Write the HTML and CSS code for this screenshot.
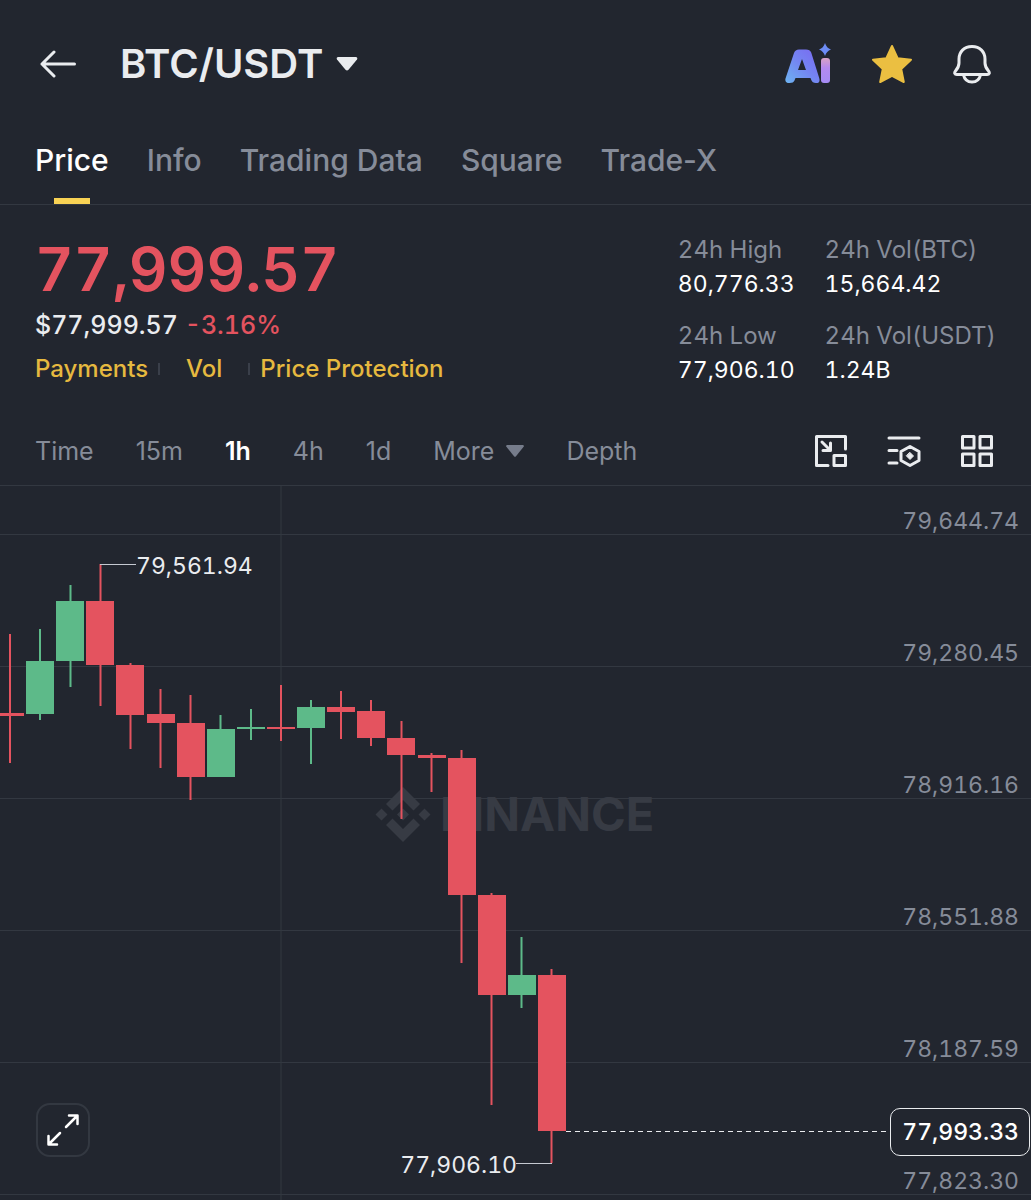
FILE: index.html
```html
<!DOCTYPE html>
<html lang="en">
<head>
    <meta charset="UTF-8">
    <meta name="viewport" content="width=device-width, initial-scale=1.0">
    <title>BTC/USDT</title>
    <link rel="stylesheet" href="styles.css">
</head>
<body>

    <!-- Top bar -->
    <header class="topbar">
        <button class="icon-btn back" type="button" aria-label="Back">
            <svg width="36" height="28" viewBox="0 0 36 28" fill="none" stroke="#eaecef" stroke-width="3" stroke-linecap="round" stroke-linejoin="round">
                <path d="M34.500 14H2M14 2L2 14l12 12"/>
            </svg>
        </button>
        <h1 class="pair">
            <button class="pair-btn" type="button">BTC/USDT
                <svg width="22" height="14" viewBox="0 0 22 14" fill="#eaecef"><path d="M2 0h18q2 .6 1 2.400l-8.500 10.300q-1.500 1.400-3 0L1 2.400Q0 .6 2 0z"/></svg>
            </button>
        </h1>
        <div class="topbar-actions">
            <button class="icon-btn" type="button" aria-label="AI">
                <svg width="46" height="42" viewBox="0 0 46 42">
                    <defs>
                        <linearGradient id="aiA" x1="0" y1="1" x2="1" y2="0">
                            <stop offset="0" stop-color="#6db4f2"/>
                            <stop offset=".5" stop-color="#7485f2"/>
                            <stop offset="1" stop-color="#7a68f0"/>
                        </linearGradient>
                        <linearGradient id="aiI" x1="0" y1="0" x2="0" y2="1">
                            <stop offset="0" stop-color="#d9a3c4"/>
                            <stop offset=".4" stop-color="#b48af0"/>
                            <stop offset="1" stop-color="#a58cf5"/>
                        </linearGradient>
                    </defs>
                    <path fill="url(#aiA)" fill-rule="evenodd" d="M14 6.500h7q4 0 5.200 3l8 25.500q1.500 5-3.200 5-3.700 0-4.700-3l-.8-2H10.500l-1 2.500Q8.500 40 4.500 40q-5 0-4-4.500L9 10q1.200-3.500 5-3.500zM17 16l-4 11h8z"/>
                    <rect x="36" y="15" width="9" height="25" rx="3" fill="url(#aiI)"/>
                    <path fill="#6d8cf5" d="M40 0q1.500 5 6 6.500-4.500 1.500-6 6.500-1.500-5-6-6.500 4.500-1.500 6-6.500z"/>
                </svg>
            </button>
            <button class="icon-btn" type="button" aria-label="Favorite">
                <svg width="40" height="40" viewBox="0 0 40 40" fill="#ebbf41" stroke="#ebbf41" stroke-width="2" stroke-linejoin="round">
                    <path d="M20 2l5.600 12.200L39 15.700l-9.800 9.300 2.600 13L20 31.800 8.200 38l2.600-13L1 15.700l13.400-1.500z"/>
                </svg>
            </button>
            <button class="icon-btn" type="button" aria-label="Alerts">
                <svg width="38" height="40" viewBox="0 0 38 40" fill="none" stroke="#eaecef" stroke-width="3" stroke-linejoin="round">
                    <path d="M19 2.500C11 2.500 6 8 6 15v4c0 4-1.300 5.500-3.500 8-1.500 2-.8 3.500 1.300 3.500h30.400c2.100 0 2.800-1.500 1.300-3.500-2.200-2.500-3.500-4-3.500-8v-4c0-7-5-12.500-13-12.500zM10.500 31c1 4.500 4 7 8.500 7s7.500-2.500 8.500-7"/>
                </svg>
            </button>
        </div>
    </header>

    <!-- Section tabs -->
    <nav class="tabs">
        <a class="tab active" href="#price">Price</a>
        <a class="tab" href="#info">Info</a>
        <a class="tab" href="#data">Trading Data</a>
        <a class="tab" href="#square">Square</a>
        <a class="tab" href="#tradex">Trade-X</a>
    </nav>

    <!-- Last price and 24h stats -->
    <section class="summary" id="price">
        <div class="quote">
            <div class="last">77,999.57</div>
            <div class="fiat">$77,999.57 <span class="down">-3.16%</span></div>
            <div class="tags">
                <a href="#payments">Payments</a>
                <a class="tag-vol" href="#vol">Vol</a>
                <a href="#protection">Price Protection</a>
            </div>
        </div>
        <dl class="stats">
            <div><dt>24h High</dt><dd>80,776.33</dd></div>
            <div><dt>24h Vol(BTC)</dt><dd>15,664.42</dd></div>
            <div><dt>24h Low</dt><dd>77,906.10</dd></div>
            <div><dt>24h Vol(USDT)</dt><dd>1.24B</dd></div>
        </dl>
    </section>

    <!-- Interval bar -->
    <div class="intervals">
        <div class="interval-list">
            <button type="button">Time</button>
            <button type="button">15m</button>
            <button type="button" class="active">1h</button>
            <button type="button">4h</button>
            <button type="button">1d</button>
            <button type="button" class="more">More
                <svg width="18" height="12" viewBox="0 0 18 12" fill="#767c8b"><path d="M1 0h16q1.500.5.600 1.800L10 11.200q-1 1-2 0L.4 1.800Q-.5.500 1 0z"/></svg>
            </button>
            <button type="button">Depth</button>
        </div>
        <div class="tools">
            <button class="icon-btn" type="button" aria-label="Floating window">
                <svg width="32" height="32" viewBox="0 0 32 32" fill="none" stroke="#eaecef" stroke-width="3" stroke-linecap="round" stroke-linejoin="round">
                    <path d="M30.500 14V1.500h-29v29H13M7 7l8 8M15.500 8v7.500H8"/>
                    <path d="M19 20.500h11.500v10H19z"/>
                </svg>
            </button>
            <button class="icon-btn" type="button" aria-label="Indicators">
                <svg width="34" height="32" viewBox="0 0 34 32" fill="none" stroke="#eaecef" stroke-width="3" stroke-linecap="round" stroke-linejoin="round">
                    <path d="M2 3h30M2 15.500h8M2 28h8M23 11.500l9 5v9l-9 5-9-5v-9z"/>
                    <path fill="#eaecef" stroke-width="1" d="M23 17.500l3.500 3.500-3.500 3.500-3.500-3.500z"/>
                </svg>
            </button>
            <button class="icon-btn" type="button" aria-label="Layout">
                <svg width="32" height="32" viewBox="0 0 32 32" fill="none" stroke="#eaecef" stroke-width="3" stroke-linejoin="round">
                    <path d="M1.500 1.500h11.500v11.500h-11.500zM19 1.500h11.500v11.500H19zM1.500 19h11.500v11.500h-11.500zM19 19h11.500v11.500H19z"/>
                </svg>
            </button>
        </div>
    </div>

    <!-- Candlestick chart -->
    <main class="chart">
        <ul class="axis">
            <li>79,644.74</li>
            <li>79,280.45</li>
            <li>78,916.16</li>
            <li>78,551.88</li>
            <li>78,187.59</li>
            <li>77,823.30</li>
        </ul>

        <svg class="plot" width="100%" height="100%">
            <line class="grid-line" x1="281" y1="0" x2="281" y2="100%"/>

            <!-- Watermark -->
            <g class="watermark">
                <path d="M403 301l17 17-6.500 6.500-10.500-10.500-10.500 10.500-6.500-6.500zM403 356l17-17-6.500-6.500-10.500 10.500-10.500-10.500-6.500 6.500zM381.500 322.500l6 6-6 6-6-6zM424.500 322.500l6 6-6 6-6-6zM403 322.500l6 6-6 6-6-6z"/>
                <text x="440" y="345">BINANCE</text>
            </g>

            <g class="candle-down">
                <path d="M10 148v129M100.500 78v142M130.500 177v86M160.500 203v79M190.500 209v105M281 199v56M341 205v48M371 214v46M401.500 235v98M431.500 267v39M461.500 264v213M491.500 407v212M551.500 483v194"/>
                <rect x="-4" y="227" width="28" height="3"/>
                <rect x="86" y="115" width="28" height="64"/>
                <rect x="116" y="179" width="28" height="50"/>
                <rect x="147" y="228" width="28" height="9"/>
                <rect x="177" y="237" width="28" height="54"/>
                <rect x="267" y="241" width="28" height="2"/>
                <rect x="327" y="221" width="28" height="5"/>
                <rect x="357" y="225" width="28" height="27"/>
                <rect x="387" y="252" width="28" height="17"/>
                <rect x="418" y="269" width="28" height="3"/>
                <rect x="448" y="272" width="28" height="137"/>
                <rect x="478" y="409" width="28" height="100"/>
                <rect x="538" y="489" width="28" height="156"/>
            </g>
            <g class="candle-up">
                <path d="M40 143v91M70.500 99v102M220.500 229v62M251 223v31M311 214v64M521.500 451v71"/>
                <rect x="26" y="175" width="28" height="53"/>
                <rect x="56" y="115" width="28" height="60"/>
                <rect x="207" y="243" width="28" height="48"/>
                <rect x="237" y="241" width="28" height="2"/>
                <rect x="297" y="221" width="28" height="21"/>
                <rect x="508" y="489" width="28" height="20"/>
            </g>

            <!-- High and low markers -->
            <path class="leader" d="M100 78.500h36M516 677.500h36"/>
            <text class="marker" x="136" y="88">79,561.94</text>
            <text class="marker" x="517" y="687" text-anchor="end">77,906.10</text>

            <line class="last-line" x1="566" y1="645.500" x2="100%" y2="645.500"/>
        </svg>

        <output class="last-tag">77,993.33</output>

        <button class="expand" type="button" aria-label="Full screen">
            <svg width="32" height="32" viewBox="0 0 32 32" fill="none" stroke="#fff" stroke-width="2.500" stroke-linecap="round" stroke-linejoin="round">
                <path d="M19 13L30 2M22 1.500h8.500V10M13 19L2 30M1.500 22v8.500H10"/>
            </svg>
        </button>
    </main>

</body>
</html>
```

FILE: styles.css
```css
* {
    box-sizing: border-box;
}

body {
    margin: 0;
    background-color: #22262f;
    color: #eaecef;
    font-family: Inter, "Liberation Sans", sans-serif;
    font-size: 24px;
    line-height: 32px;
}

button {
    padding: 0;
    border: none;
    background: none;
    color: inherit;
    font: inherit;
    cursor: pointer;
}

a {
    text-decoration: none;
}

svg {
    display: block;
}

/* Top bar */
.topbar {
    display: flex;
    align-items: center;
    height: 128px;
    padding: 0 40px;
}

.pair {
    margin: 0 0 0 44px;
    font-size: 40px;
    font-weight: 600;
    line-height: 48px;
}

.pair-btn {
    display: flex;
    align-items: center;
    gap: 13px;
}

.topbar-actions {
    display: flex;
    align-items: center;
    gap: 41px;
    margin-left: auto;
}

/* Tabs */
.tabs {
    display: flex;
    gap: 38px;
    height: 77px;
    padding: 12px 35px 0;
    border-bottom: 1px solid #333841;
    font-size: 30px;
    font-weight: 500;
    line-height: 40px;
}

.tab {
    position: relative;
    color: #868c99;
}

.tab.active {
    color: #fff;
}

.tab.active::after {
    content: "";
    position: absolute;
    left: 50%;
    bottom: 0;
    width: 36px;
    height: 6px;
    margin-left: -18px;
    background-color: #f8d254;
}

/* Price summary */
.summary {
    display: flex;
    justify-content: space-between;
    padding: 28px 35px 0;
    font-variant-numeric: tabular-nums;
}

.last {
    color: #e4535f;
    font-size: 60px;
    font-weight: 600;
    line-height: 72px;
}

.fiat {
    margin-top: 4px;
    font-size: 25px;
    font-weight: 500;
}

.down {
    color: #e4535f;
}

.tags {
    display: flex;
    margin-top: 12px;
    font-weight: 500;
}

.tags a {
    color: #e6b93f;
}

.tags a + a {
    display: flex;
    align-items: center;
    margin-left: 10px;
}

.tags a + a::before {
    content: "";
    width: 2px;
    height: 12px;
    margin-right: 10px;
    background-color: #3a3f4a;
}

.tags .tag-vol {
    padding-right: 16px;
}

.tags .tag-vol::before {
    margin-right: 26px;
}

.stats {
    display: grid;
    grid-template-columns: auto auto;
    gap: 18px 30px;
    align-content: start;
    margin: 0;
    line-height: 34px;
}

.stats dt {
    color: #868c99;
}

.stats dd {
    margin: 0;
    color: #fff;
    font-size: 23px;
}

/* Interval bar */
.intervals {
    display: flex;
    align-items: center;
    justify-content: space-between;
    height: 70px;
    margin-top: 29px;
    padding: 0 38px 0 35px;
    border-bottom: 1px solid #333841;
}

.interval-list {
    display: flex;
    gap: 42px;
    color: #868c99;
    font-size: 25px;
}

.interval-list .active {
    color: #fff;
    font-weight: 600;
}

.more {
    display: flex;
    align-items: center;
    gap: 12px;
}

.tools {
    display: flex;
    align-items: center;
    gap: 40px;
}

/* Chart */
.chart {
    position: relative;
    padding-bottom: 5px;
    overflow: hidden;
    font-size: 23px;
    font-variant-numeric: tabular-nums;
}

.axis {
    display: grid;
    grid-template-rows: 49px;
    grid-auto-rows: 132px;
    margin: 0;
    padding: 0;
    color: #868c99;
    line-height: 26px;
    list-style: none;
}

.axis li {
    display: flex;
    align-items: flex-end;
    justify-content: flex-end;
    padding-right: 12px;
    border-bottom: 1px solid #333841;
}

.plot {
    position: absolute;
    inset: 0;
}

.grid-line {
    stroke: #333841;
    stroke-width: 1;
}

.watermark {
    fill: #373b44;
}

.watermark text {
    font-size: 47px;
    font-weight: 700;
}

.candle-down {
    fill: #e4535f;
    stroke: none;
}

.candle-up {
    fill: #5dba89;
    stroke: none;
}

.candle-down path {
    stroke: #e4535f;
    stroke-width: 2;
}

.candle-up path {
    stroke: #5dba89;
    stroke-width: 2;
}

.leader {
    stroke: #c5c9d1;
    stroke-width: 1;
}

.marker {
    fill: #eaecef;
}

.last-line {
    stroke: #eaecef;
    stroke-width: 1;
    stroke-dasharray: 5 4;
}

.last-tag {
    position: absolute;
    right: 1px;
    bottom: 44px;
    padding: 7px 10px 7px 11px;
    border: 1px solid #eaecef;
    border-radius: 10px;
    background-color: #22262f;
    color: #fff;
    font-weight: 500;
}

.expand {
    position: absolute;
    left: 36px;
    bottom: 43px;
    display: flex;
    align-items: center;
    justify-content: center;
    width: 54px;
    height: 54px;
    border: 2px solid #333841;
    border-radius: 14px;
}
```
